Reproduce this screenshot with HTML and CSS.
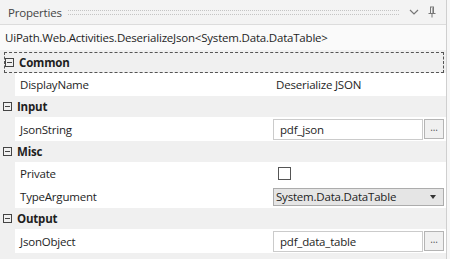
FILE: index.html
```html
<!DOCTYPE html>
<html lang="en">
<head>
    <meta charset="UTF-8">
    <meta name="viewport" content="width=device-width, initial-scale=1.0">
    <title>Properties</title>
    <link rel="stylesheet" href="styles.css">
</head>
<body>
    <div class="panel">
        <div class="titlebar">
            <span class="title">Properties</span>
            <span class="grip"></span>
            <svg class="chevron" width="10" height="6" viewBox="0 0 10 6">
                <path d="M1 1 L5 5 L9 1" fill="none" stroke="#777" stroke-width="1.2"/>
            </svg>
            <svg class="pin" width="8" height="12" viewBox="0 0 8 12">
                <path d="M2 1 H6 M2.5 1 V7 M5.5 1 V7 M0.5 7.5 H7.5 M4 8 V11.5" fill="none" stroke="#777" stroke-width="1"/>
                <path d="M4.5 1.5 V7" stroke="#aaa" stroke-width="1"/>
            </svg>
        </div>
        <div class="typename">UiPath.Web.Activities.DeserializeJson&lt;System.Data.DataTable&gt;</div>

        <div class="grid">
            <div class="category focused"><span class="expander"></span>Common</div>
            <div class="prop">
                <span class="name">DisplayName</span>
                <span class="value"><span class="plain">Deserialize JSON</span></span>
            </div>

            <div class="category"><span class="expander"></span>Input</div>
            <div class="prop tall">
                <span class="name">JsonString</span>
                <span class="value">
                    <span class="textbox">pdf_json</span>
                    <span class="dots">...</span>
                </span>
            </div>

            <div class="category"><span class="expander"></span>Misc</div>
            <div class="prop">
                <span class="name">Private</span>
                <span class="value"><span class="checkbox"></span></span>
            </div>
            <div class="prop">
                <span class="name">TypeArgument</span>
                <span class="value">
                    <span class="combo">System.Data.DataTable<span class="arrow"></span></span>
                </span>
            </div>

            <div class="category"><span class="expander"></span>Output</div>
            <div class="prop tall">
                <span class="name">JsonObject</span>
                <span class="value">
                    <span class="textbox">pdf_data_table</span>
                    <span class="dots">...</span>
                </span>
            </div>
        </div>
    </div>
</body>
</html>
```

FILE: styles.css
```css
body {
    margin: 0;
    background-color: #f7f7f7;
    font-family: "Open Sans", "Noto Sans", sans-serif;
    font-size: 11.5px;
    letter-spacing: -0.2px;
    color: #1e1e1e;
}
.panel {
    width: 446px;
    height: 259px;
    border-right: 1px solid #cfcfcf;
    background-color: #f0f0f0;
}
.titlebar {
    display: flex;
    align-items: center;
    height: 24px;
    padding: 0 10px 0 8px;
    border-bottom: 1px solid #dcdcdc;
    background-color: #f3f3f3;
}
.title {
    color: #444;
}
.grip {
    flex: 1;
    height: 3px;
    margin: 0 10px 0 6px;
    border-top: 1px dotted #c4c4c4;
    border-bottom: 1px dotted #c4c4c4;
}
.chevron {
    margin-right: 9px;
}
.typename {
    height: 25px;
    line-height: 25px;
    padding-left: 5px;
    background-color: #fafafa;
    white-space: nowrap;
}
.grid {
    margin-top: 2px;
}
.category {
    display: flex;
    align-items: center;
    height: 21px;
    padding-left: 3px;
    font-weight: bold;
    box-sizing: border-box;
}
.category.focused {
    margin: 0 2px 0 4px;
    padding-left: 0;
    border: 1px dashed #555;
}
.expander {
    position: relative;
    width: 7px;
    height: 7px;
    margin-right: 5px;
    border: 1px solid #444;
}
.expander::after {
    content: "";
    position: absolute;
    left: 1px;
    top: 3px;
    width: 5px;
    height: 1px;
    background-color: #444;
}
.prop {
    display: flex;
    align-items: center;
    height: 23px;
    margin-left: 15px;
    background-color: #fff;
}
.prop.tall {
    height: 24px;
}
.name {
    width: 258px;
    padding-left: 5px;
    box-sizing: border-box;
}
.value {
    flex: 1;
    display: flex;
    align-items: center;
    padding-right: 2px;
}
.plain {
    padding-left: 3px;
}
.textbox {
    flex: 1;
    height: 19px;
    line-height: 19px;
    padding-left: 6px;
    border: 1px solid #cbcbcb;
    background-color: #fff;
}
.dots {
    width: 18px;
    height: 18px;
    line-height: 14px;
    margin-left: 1px;
    text-align: center;
    font-size: 10px;
    color: #555;
    border: 1px solid #b4b4b4;
    background-color: #f0f0f0;
}
.checkbox {
    width: 11px;
    height: 11px;
    margin-left: 5px;
    border: 1px solid #555;
    background-color: #fff;
}
.combo {
    position: relative;
    flex: 1;
    height: 16px;
    line-height: 16px;
    padding-left: 2px;
    border: 1px solid #acacac;
    background-color: #e5e5e5;
}
.arrow {
    position: absolute;
    right: 7px;
    top: 6px;
    border-left: 3px solid transparent;
    border-right: 3px solid transparent;
    border-top: 4px solid #333;
}
```
